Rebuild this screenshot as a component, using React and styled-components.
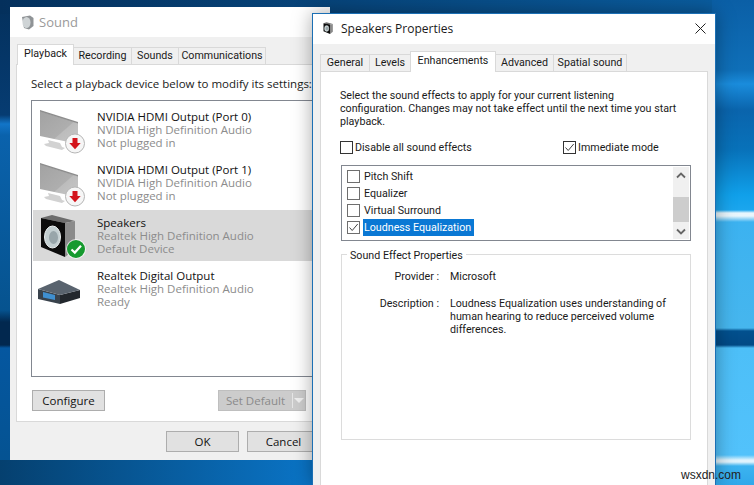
import React from 'react';
import styled, { createGlobalStyle } from 'styled-components';

const Global = createGlobalStyle`
  html, body { margin: 0; padding: 0; width: 754px; height: 485px; overflow: hidden; }
  #root { width: 754px; height: 485px; }
  * { box-sizing: border-box; }
`;

const Desktop = styled.div`
  position: relative;
  width: 754px;
  height: 485px;
  overflow: hidden;
  font-family: "Open Sans", "Noto Sans", sans-serif;
  font-size: 11.5px;
  line-height: 13px;
  color: #1a1a1a;
  background:
    linear-gradient(180deg, #0b5fa6 0, #0f6fb8 70px, #1a8cdc 84px, #0a64ac 110px, #0872ba 150px, #10a0ea 195px, #1ba6ee 210px, #e8f6fd 213px, #e8f6fd 216px, #3cb2f0 222px, #46b6ee 328px, #02508e 331px, #024a86 345px, #4dbff8 348px, #52c2fb 455px, #dff3fd 460px, #dff3fd 462px, #3cb3f0 466px, #30a8ea 485px) right top / 42px 100% no-repeat,
    linear-gradient(90deg, #05406f 0, #0a74c6 312px) left 460px / 320px 25px no-repeat,
    linear-gradient(90deg, #04305c 0, #0a5c9e 100%) left top / 712px 14px no-repeat,
    linear-gradient(180deg, #04305c 0, #063c72 115px, #1275c8 124px, #0a62ac 135px, #06538f 310px, #02284f 322px, #02284f 345px, #0557a0 348px, #05528f 485px) left top / 12px 100% no-repeat;
  background-color: #0a5fa8;
`;

const Win = styled.section`
  position: absolute;
  left: ${p => p.$x}px;
  top: ${p => p.$y}px;
  width: ${p => p.$w}px;
  height: ${p => p.$h}px;
  background: #f0f0f0;
  display: flex;
  flex-direction: column;
  ${p => p.$front ? 'border: 1px solid #1b6fb4; border-bottom: 0; box-shadow: 0 0 18px rgba(0,0,0,.35);' : ''}
`;

const TitleBar = styled.header`
  flex: none;
  height: ${p => p.$h}px;
  background: #fff;
  display: flex;
  align-items: center;
  padding-left: ${p => p.$pl}px;
  padding-bottom: ${p => p.$pb || 0}px;
  gap: 5px;
  font-size: ${p => p.$fs}px;
  color: ${p => p.$c};
`;

const CloseIcon = styled.svg`
  margin-left: auto;
  margin-right: 9px;
  width: 11px;
  height: 11px;
`;

const TabStrip = styled.div`
  flex: none;
  display: flex;
  align-items: flex-end;
  height: 21px;
  position: relative;
  z-index: 1;
  margin-bottom: -1px;
  padding-left: ${p => p.$pl}px;
`;

const Tab = styled.div`
  width: ${p => p.$w}px;
  height: ${p => p.$active ? 21 : 18}px;
  font-family: Roboto, "Open Sans", sans-serif;
  font-size: 10.7px;
  background: ${p => p.$active ? '#fff' : '#f0f0f0'};
  border: 1px solid #d9d9d9;
  border-bottom: ${p => p.$active ? '0' : '1px solid #d9d9d9'};
  margin-right: -1px;
  display: flex;
  align-items: center;
  justify-content: center;
  position: relative;
  z-index: ${p => p.$active ? 1 : 0};
  white-space: nowrap;
  padding-bottom: ${p => p.$active ? 3 : 1}px;
`;

const SoundBody = styled.div`
  flex: 1;
  display: flex;
  flex-direction: column;
  padding: 7px 0 0 6px;
`;

const SoundPanel = styled.div`
  width: 308px;
  height: 358px;
  background: #fff;
  border: 1px solid #d9d9d9;
  padding: 12px 14px 0;
`;

const Intro = styled.p`
  margin: 0;
  white-space: nowrap;
`;

const DeviceList = styled.div`
  margin-top: 10px;
  width: 300px;
  height: 277px;
  border: 1px solid #828790;
  background: #fff;
  padding: 3px 1px;
`;

const Device = styled.div`
  height: 51px;
  margin-bottom: 2px;
  display: flex;
  align-items: center;
  gap: 11px;
  padding-left: 3px;
  background: ${p => p.$selected ? '#d9d9d9' : 'transparent'};
`;

const DeviceIcon = styled.svg`
  flex: none;
  width: 50px;
  height: 51px;
`;

const DeviceText = styled.div`
  display: flex;
  flex-direction: column;
  white-space: nowrap;
`;

const DeviceName = styled.span`
  color: #111;
`;

const DeviceMeta = styled.span`
  color: #8c8c8c;
`;

const PanelFooter = styled.div`
  display: flex;
  justify-content: space-between;
  width: 274px;
  margin: 13px 0 0 1px;
`;

const Btn = styled.button`
  font: inherit;
  color: #111;
  width: ${p => p.$w}px;
  height: 21px;
  padding: 0;
  background: #e1e1e1;
  border: 1px solid #adadad;
`;

const SplitBtn = styled.div`
  width: 88px;
  height: 21px;
  display: flex;
  align-items: center;
  background: #cccccc;
  border: 1px solid #bfbfbf;
  color: #8a8a8a;
`;

const SplitLabel = styled.span`
  width: 73px;
  text-align: center;
`;

const SplitArrow = styled.span`
  flex: 1;
  height: 15px;
  border-left: 1px solid #e6e6e6;
  display: flex;
  align-items: center;
  justify-content: center;
  &::after {
    content: '';
    border-left: 5px solid transparent;
    border-right: 5px solid transparent;
    border-top: 5px solid #f0f0f0;
  }
`;

const WinFooter = styled.div`
  display: flex;
  gap: 8px;
  margin: 9px 0 0 150px;
`;

const PropsBody = styled.div`
  flex: 1;
  padding: 7px 0 0 7px;
  display: flex;
  flex-direction: column;
  font-family: Roboto, "Open Sans", sans-serif;
  font-size: 10.7px;
`;

const PropsPanel = styled.div`
  flex: 1;
  width: 388px;
  background: #fff;
  border: 1px solid #d9d9d9;
  border-bottom: 0;
  padding: 17px 0 0 19px;
`;

const Para = styled.p`
  margin: 0;
  white-space: nowrap;
`;

const ToggleRow = styled.div`
  display: flex;
  margin-top: 13px;
`;

const Toggle = styled.label`
  display: flex;
  align-items: center;
  gap: 2px;
  width: ${p => p.$w}px;
  white-space: nowrap;
`;

const Box = styled.span`
  flex: none;
  width: 13px;
  height: 13px;
  background: #fff;
  border: 1px solid ${p => p.$soft ? '#6e6e6e' : '#333'};
  display: flex;
  align-items: center;
  justify-content: center;
`;

const EffectList = styled.div`
  margin: 11px 0 0 1px;
  width: 350px;
  height: 76px;
  border: 1px solid #828790;
  background: #fff;
  display: flex;
`;

const EffectRows = styled.div`
  flex: 1;
  padding: 2px 0 0 5px;
`;

const EffectRow = styled.div`
  height: 17px;
  display: flex;
  align-items: center;
  gap: 3px;
`;

const EffectLabel = styled.span`
  padding: 0 3px 0 1px;
  height: 17px;
  display: flex;
  align-items: center;
  background: ${p => p.$on ? '#0a78d4' : 'transparent'};
  color: ${p => p.$on ? '#fff' : '#1a1a1a'};
`;

const ScrollBar = styled.div`
  flex: none;
  width: 16px;
  margin: 1px 1px 1px 0;
  background: #f0f0f0;
  display: flex;
  flex-direction: column;
`;

const ScrollBtn = styled.div`
  height: 16px;
  flex: none;
  display: flex;
  align-items: center;
  justify-content: center;
  ${p => p.$end ? 'margin-top: auto;' : ''}
`;

const ScrollThumb = styled.div`
  height: 25px;
  margin-top: 14px;
  background: #cdcdcd;
`;

const GroupBox = styled.div`
  position: relative;
  margin: 13px 0 0 1px;
  width: 350px;
  height: 186px;
  border: 1px solid #dcdcdc;
  padding: 15px 0 0 0;
`;

const Legend = styled.span`
  position: absolute;
  top: -6px;
  left: 5px;
  padding: 0 3px;
  background: #fff;
  white-space: nowrap;
`;

const PropGrid = styled.dl`
  margin: 0;
  display: grid;
  grid-template-columns: 97px 1fr;
  column-gap: 11px;
  row-gap: 14px;
`;

const PropKey = styled.dt`
  text-align: right;
  white-space: nowrap;
`;

const PropVal = styled.dd`
  margin: 0;
  white-space: nowrap;
`;

const Watermark = styled.span`
  position: absolute;
  left: 681px;
  top: 468px;
  font-family: "Liberation Sans", Arial, sans-serif;
  font-size: 12px;
  line-height: 14px;
  color: #222;
`;

const Check = () => (
  <svg width="11" height="11" viewBox="0 0 11 11"><path d="M1.5 5.5 L4.2 8.5 L9.7 2" fill="none" stroke="#444" strokeWidth="1" /></svg>
);

const Chevron = ({ up }) => (
  <svg width="10" height="7" viewBox="0 0 10 7"><path d={up ? 'M1 5.5 L5 1.5 L9 5.5' : 'M1 1.5 L5 5.5 L9 1.5'} fill="none" stroke="#666" strokeWidth="1.8" /></svg>
);

const Badge = ({ ok }) => ok ? (
  <g>
    <circle cx="40" cy="39" r="10" fill="#fff" opacity=".7" />
    <circle cx="40" cy="39" r="9" fill="#169a2f" />
    <path d="M35.5 39.5 L38.8 42.6 L45 35.8" fill="none" stroke="#fff" strokeWidth="2.2" />
  </g>
) : (
  <g>
    <circle cx="39" cy="39.5" r="9.5" fill="#f6f6f6" stroke="#b5b5b5" strokeWidth="1" />
    <path d="M36.5 34 h5 v5 h3.2 L39 45.3 L33.3 39 h3.2 Z" fill="#d3131b" />
  </g>
);

const Monitor = ({ id }) => (
  <DeviceIcon viewBox="0 0 50 51">
    <defs>
      <linearGradient id={id} x1="0" y1="0" x2="1" y2="1">
        <stop offset="0" stopColor="#a2a2a2" />
        <stop offset=".6" stopColor="#aeaeae" />
        <stop offset=".62" stopColor="#bcbcbc" />
        <stop offset="1" stopColor="#c8c8c8" />
      </linearGradient>
    </defs>
    <path d="M12 36 L24 39 L26 43 L29 44 L26 46 L10 42 L8 40 L13 39 Z" fill="#d2d2d2" />
    <path d="M4 7 L42 19 L42 40 L4 32 Z" fill={`url(#${id})`} />
    <path d="M4 6 L42 18 L42 19.5 L4 7.5 Z" fill="#8d8d8d" />
    <Badge />
  </DeviceIcon>
);

const SpeakerArt = () => (
  <>
    <path d="M5 8 L16 5 L39 11 L29 13 Z" fill="#6d6d6d" />
    <path d="M29 13 L39 11 L39 39 L29 47 Z" fill="#8b8b8b" />
    <path d="M5 8 L29 13 L29 47 L5 37 Z" fill="#0c0c0c" />
    <ellipse cx="16.5" cy="27" rx="8" ry="11" fill="#c3cfd1" stroke="#eef2f2" strokeWidth="1" />
    <ellipse cx="17.5" cy="27.5" rx="4.5" ry="6.5" fill="#98a6aa" />
  </>
);

const devices = [
  { kind: 'monitor', id: 'm0', name: 'NVIDIA HDMI Output (Port 0)', driver: 'NVIDIA High Definition Audio', state: 'Not plugged in' },
  { kind: 'monitor', id: 'm1', name: 'NVIDIA HDMI Output (Port 1)', driver: 'NVIDIA High Definition Audio', state: 'Not plugged in' },
  { kind: 'speaker', name: 'Speakers', driver: 'Realtek High Definition Audio', state: 'Default Device', selected: true },
  { kind: 'digital', name: 'Realtek Digital Output', driver: 'Realtek High Definition Audio', state: 'Ready' },
];

const DeviceArt = ({ d }) => {
  if (d.kind === 'monitor') return <Monitor id={d.id} />;
  if (d.kind === 'speaker') return (
    <DeviceIcon viewBox="0 0 50 51"><SpeakerArt /><Badge ok /></DeviceIcon>
  );
  return (
    <DeviceIcon viewBox="0 0 50 51">
      <path d="M2 26 L24 32 L24 41 L2 36 Z" fill="#39424c" />
      <path d="M24 32 L44 27 L44 35 L24 41 Z" fill="#22272d" />
      <path d="M2 26 L23 17 L44 27 L24 32 Z" fill="#59636e" />
      <path d="M7 29 L19 32 L19 37 L7 34.5 Z" fill="#3f8fd0" />
    </DeviceIcon>
  );
};

const effects = [
  { label: 'Pitch Shift' },
  { label: 'Equalizer' },
  { label: 'Virtual Surround' },
  { label: 'Loudness Equalization', on: true },
];

export default function App() {
  return (
    <Desktop>
      <Global />
      <Win $x={10} $y={7} $w={320} $h={453}>
        <TitleBar $h={30} $pl={11} $fs={13} $c="#9a9a9a">
          <svg width="13" height="15" viewBox="0 0 13 15">
            <path d="M1 2 L9 0.5 L12.5 3 L12.5 11 L8 14.5 L3 13 Z" fill="#8f9396" />
            <ellipse cx="5.5" cy="7.5" rx="4" ry="5.5" fill="#cfd4d6" />
          </svg>
          <span>Sound</span>
        </TitleBar>
        <SoundBody>
          <TabStrip $pl={1}>
            <Tab $w={57} $active>Playback</Tab>
            <Tab $w={59}>Recording</Tab>
            <Tab $w={48}>Sounds</Tab>
            <Tab $w={88}>Communications</Tab>
          </TabStrip>
          <SoundPanel>
            <Intro>Select a playback device below to modify its settings:</Intro>
            <DeviceList>
              {devices.map(d => (
                <Device key={d.name} $selected={d.selected}>
                  <DeviceArt d={d} />
                  <DeviceText>
                    <DeviceName>{d.name}</DeviceName>
                    <DeviceMeta>{d.driver}</DeviceMeta>
                    <DeviceMeta>{d.state}</DeviceMeta>
                  </DeviceText>
                </Device>
              ))}
            </DeviceList>
            <PanelFooter>
              <Btn $w={73}>Configure</Btn>
              <SplitBtn>
                <SplitLabel>Set Default</SplitLabel>
                <SplitArrow />
              </SplitBtn>
            </PanelFooter>
          </SoundPanel>
          <WinFooter>
            <Btn $w={73}>OK</Btn>
            <Btn $w={73}>Cancel</Btn>
          </WinFooter>
        </SoundBody>
      </Win>

      <Win $x={312} $y={13} $w={404} $h={472} $front>
        <TitleBar $h={30} $pb={2} $pl={9} $fs={12} $c="#1a1a1a">
          <svg width="14" height="14" viewBox="0 0 50 51">
            <SpeakerArt />
          </svg>
          <span>Speakers Properties</span>
          <CloseIcon viewBox="0 0 11 11"><path d="M0.5 0.5 L10.5 10.5 M10.5 0.5 L0.5 10.5" stroke="#222" strokeWidth="1" /></CloseIcon>
        </TitleBar>
        <PropsBody>
          <TabStrip $pl={0}>
            <Tab $w={50}>General</Tab>
            <Tab $w={42}>Levels</Tab>
            <Tab $w={86} $active>Enhancements</Tab>
            <Tab $w={59}>Advanced</Tab>
            <Tab $w={74}>Spatial sound</Tab>
          </TabStrip>
          <PropsPanel>
            <Para>
              Select the sound effects to apply for your current listening<br />
              configuration. Changes may not take effect until the next time you start<br />
              playback.
            </Para>
            <ToggleRow>
              <Toggle $w={223}><Box />Disable all sound effects</Toggle>
              <Toggle><Box><Check /></Box>Immediate mode</Toggle>
            </ToggleRow>
            <EffectList>
              <EffectRows>
                {effects.map(e => (
                  <EffectRow key={e.label}>
                    <Box $soft>{e.on && <Check />}</Box>
                    <EffectLabel $on={e.on}>{e.label}</EffectLabel>
                  </EffectRow>
                ))}
              </EffectRows>
              <ScrollBar>
                <ScrollBtn><Chevron up /></ScrollBtn>
                <ScrollThumb />
                <ScrollBtn $end><Chevron /></ScrollBtn>
              </ScrollBar>
            </EffectList>
            <GroupBox>
              <Legend>Sound Effect Properties</Legend>
              <PropGrid>
                <PropKey>Provider :</PropKey>
                <PropVal>Microsoft</PropVal>
                <PropKey>Description :</PropKey>
                <PropVal>
                  Loudness Equalization uses understanding of<br />
                  human hearing to reduce perceived volume<br />
                  differences.
                </PropVal>
              </PropGrid>
            </GroupBox>
          </PropsPanel>
        </PropsBody>
      </Win>
      <Watermark>wsxdn.com</Watermark>
    </Desktop>
  );
}
